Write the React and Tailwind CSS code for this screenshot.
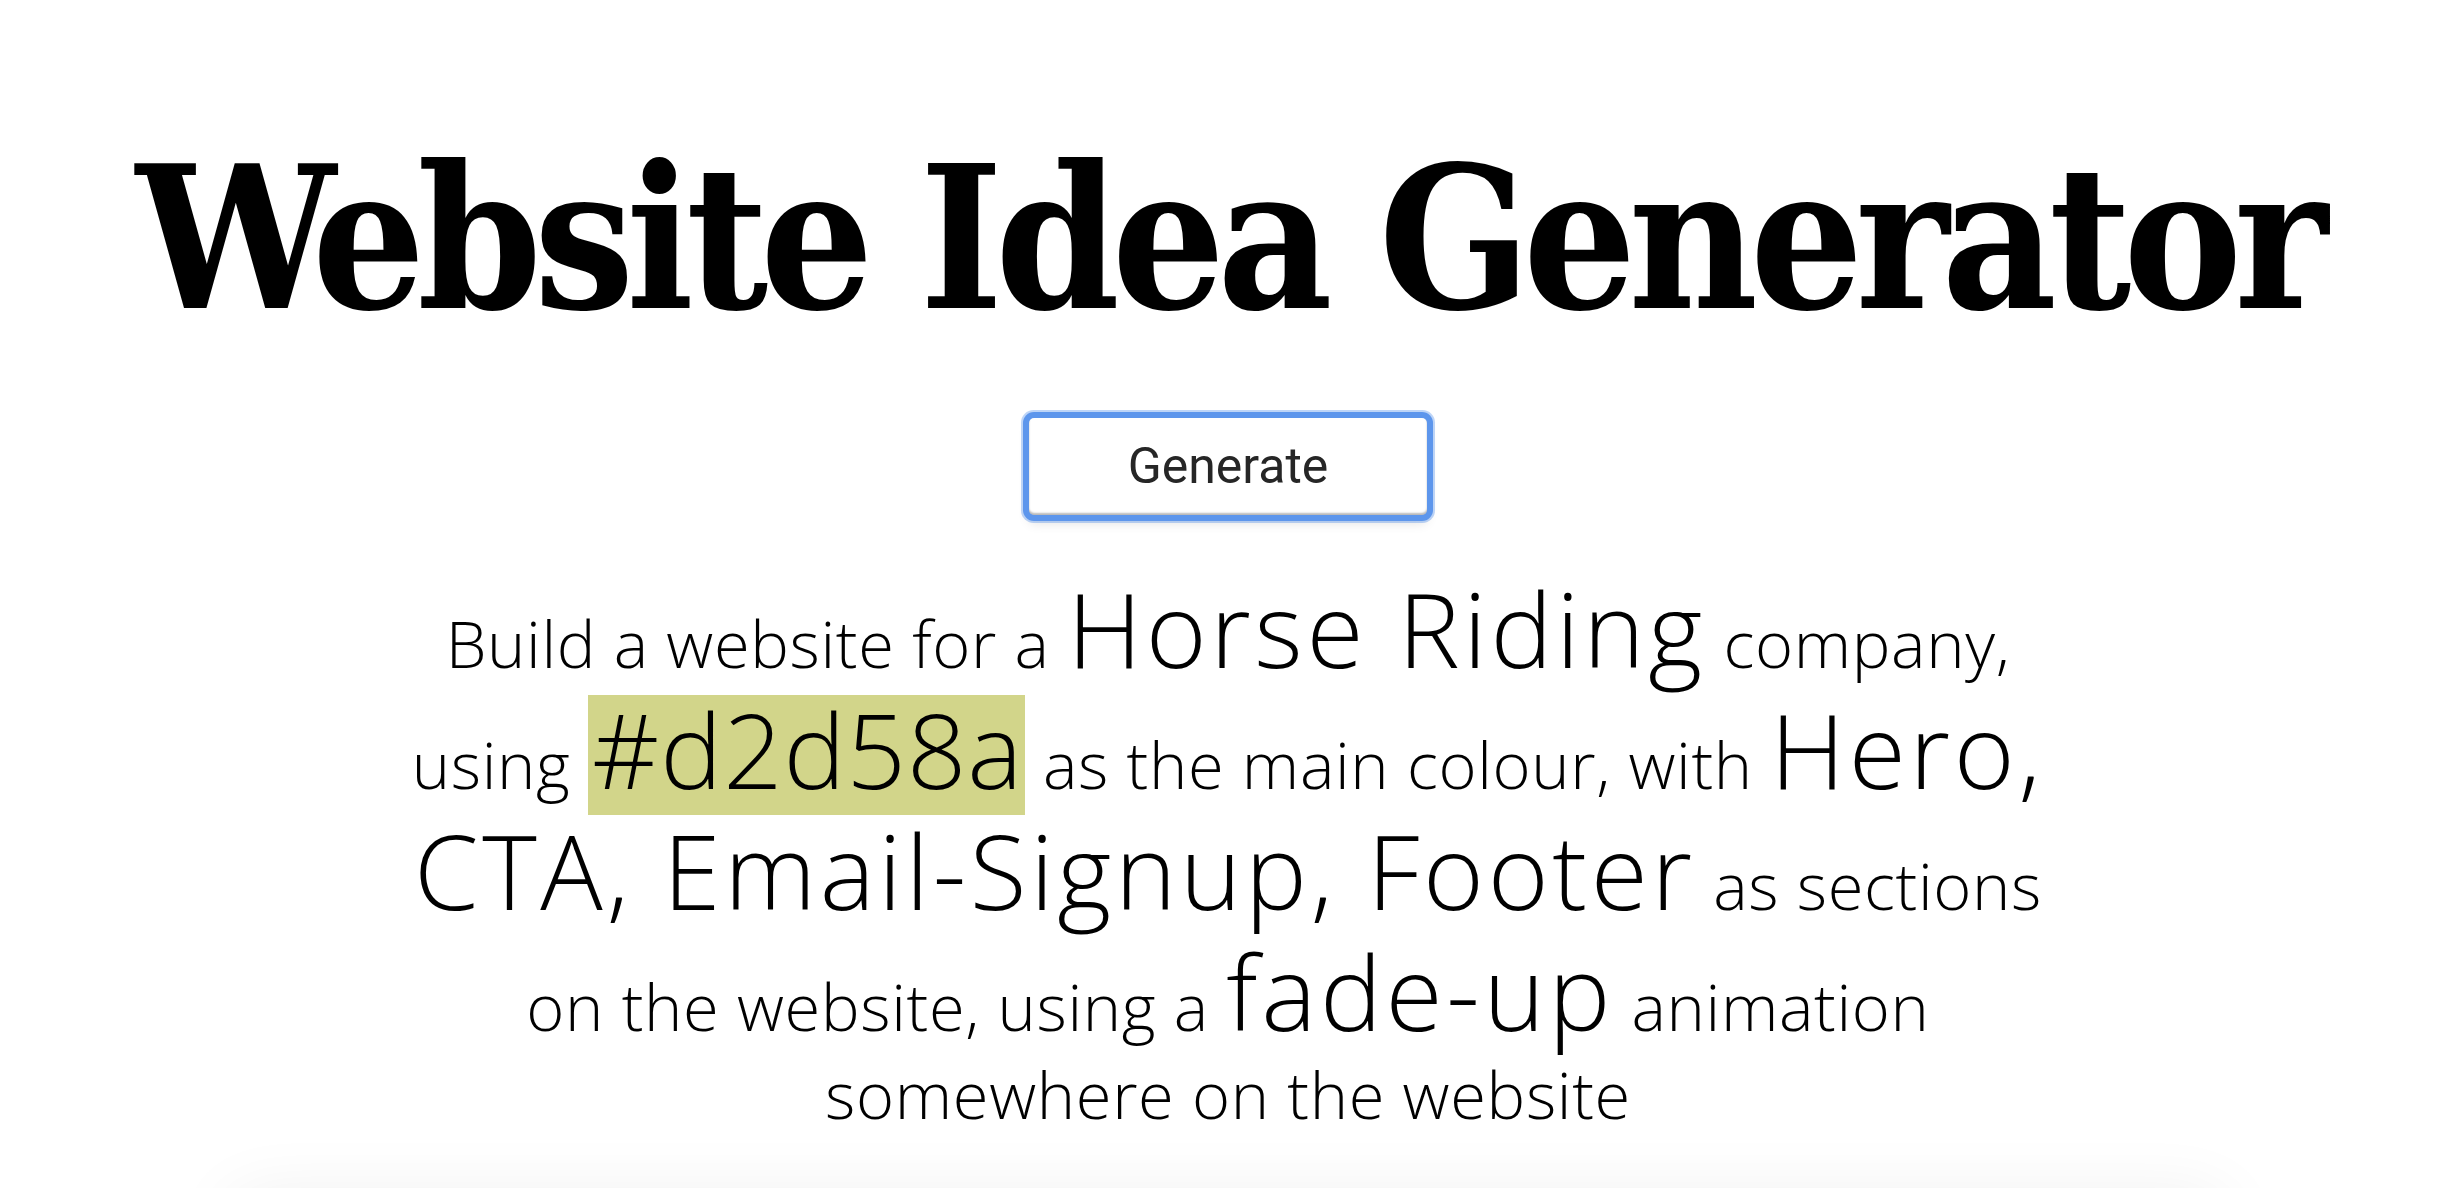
import React from 'react'

const Big = ({ children }) => (
  <span className="text-[104px] leading-[121px] tracking-[0.035em]">{children}</span>
)

export default function App() {
  return (
    <div className="min-h-screen bg-white flex flex-col items-center pt-[140px] overflow-hidden">
      {/* Title */}
      <h1 className="font-['DejaVu_Serif_Condensed','DejaVu_Serif',serif] font-bold text-[198px] leading-[1] whitespace-nowrap text-black tracking-[-0.04em]">
        Website Idea Generator
      </h1>

      {/* Generate button */}
      <button className="mt-[80px] w-[398px] h-[97px] rounded-[5px] bg-white shadow-[inset_0_-2px_2px_rgba(0,0,0,0.28),0_0_0_6px_#5d96ec,0_0_0_8px_rgba(93,150,236,0.4),0_8px_12px_rgba(0,0,0,0.12)] font-['Roboto',sans-serif] text-[50px] text-[#262626]">
        Generate
      </button>

      {/* Idea text */}
      <p className="mt-[52px] font-['Open_Sans',sans-serif] font-light text-[65px] leading-[86px] tracking-[0.01em] text-black text-center whitespace-nowrap">
        Build a website for a <Big>Horse Riding</Big> company,
        <br />
        using{' '}
        <span className="inline-block bg-[#d2d58a] text-[104px] leading-[108px] pb-[12px] mb-[-6px] pl-[4px] pr-[2px] tracking-[0.01em]">#d2d58a</span>{' '}
        as the main colour, with <Big>Hero,</Big>
        <br />
        <Big>CTA, Email-Signup, Footer</Big> as sections
        <br />
        on the website, using a <Big>fade-up</Big> animation
        <br />
        somewhere on the website
      </p>

      {/* Card below the fold */}
      <div className="mt-[60px] w-[1990px] h-[400px] shrink-0 rounded-[12px] bg-white shadow-[0_0_70px_rgba(0,0,0,0.07)]" />
    </div>
  )
}
